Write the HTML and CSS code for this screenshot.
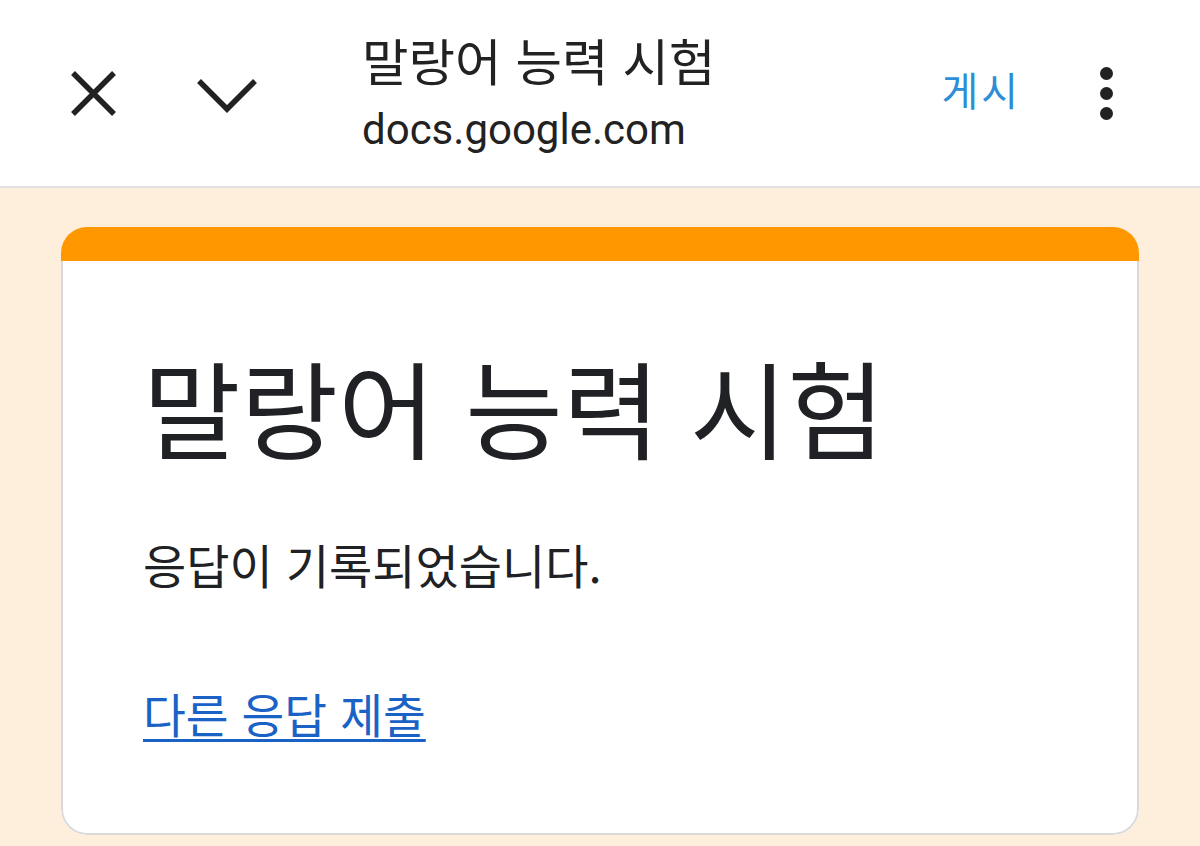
FILE: index.html
```html
<!DOCTYPE html>
<html lang="ko">
<head>
<meta charset="utf-8">
<meta name="viewport" content="width=device-width, initial-scale=1">
<title>말랑어 능력 시험</title>
<link rel="stylesheet" href="styles.css">
</head>
<body>

<header class="topbar">
	<svg class="icon-close" viewBox="0 0 45 45">
		<path d="M2 2 L43 43 M43 2 L2 43" />
	</svg>
	<svg class="icon-chevron" viewBox="0 0 60 36">
		<path d="M2 3 L30 31 L58 3" />
	</svg>
	<div class="titles">
		<div class="page-title">말랑어 능력 시험</div>
		<div class="page-url">docs.google.com</div>
	</div>
	<div class="post">게시</div>
	<div class="kebab"><span></span><span></span><span></span></div>
</header>

<main class="page">
	<div class="card">
		<div class="card-stripe"></div>
		<div class="card-body">
			<h1 class="form-title">말랑어 능력 시험</h1>
			<p class="form-msg">응답이 기록되었습니다.</p>
			<a class="form-link" href="#">다른 응답 제출</a>
		</div>
	</div>
</main>

</body>
</html>
```

FILE: styles.css
```css
body {
	margin: 0;
	background: #fdefdb;
	font-family: "Noto Sans CJK KR", "Roboto", sans-serif;
	color: #202124;
}

/* top chrome bar */
.topbar {
	display: flex;
	align-items: center;
	height: 186px;
	padding-left: 71px;
	background: #fff;
	border-bottom: 2px solid #e2e2e2;
}

.icon-close {
	width: 45px;
	height: 45px;
	fill: none;
	stroke: #222;
	stroke-width: 5.5;
}

.icon-chevron {
	width: 60px;
	height: 36px;
	margin-left: 81px;
	margin-top: 6px;
	fill: none;
	stroke: #222;
	stroke-width: 5.5;
}

.titles {
	flex: 1;
	margin-left: 105px;
	margin-top: -2px;
}

.page-title {
	font-size: 50.5px;
	line-height: 60px;
	color: #222;
}

.page-url {
	font-family: "Roboto", sans-serif;
	font-size: 42px;
	line-height: 50px;
	margin-top: 16px;
	color: #222;
}

.post {
	font-size: 40px;
	letter-spacing: 3px;
	color: #2d8ed8;
	margin-right: 79px;
	margin-top: -8px;
}

.kebab {
	display: flex;
	flex-direction: column;
	gap: 7px;
	margin-right: 87px;
}

.kebab span {
	width: 13px;
	height: 13px;
	border-radius: 50%;
	background: #222;
}

/* form card */
.page {
	padding: 39px 61px 0;
}

.card {
	border-radius: 26px;
	overflow: hidden;
	background: #fff;
}

.card-stripe {
	height: 34px;
	background: #ff9800;
}

.card-body {
	padding: 79px 80px 90px;
	border: 2px solid #d9d9d9;
	border-top: none;
	border-radius: 0 0 26px 26px;
}

.form-title {
	margin: 0;
	font-size: 106px;
	font-weight: 400;
	line-height: 130px;
}

.form-msg {
	margin: 64px 0 0;
	font-size: 47px;
	line-height: 60px;
}

.form-link {
	display: inline-block;
	margin-top: 89px;
	font-size: 46.5px;
	line-height: 60px;
	color: #1a62c5;
	text-decoration-thickness: 3px;
	text-underline-offset: 6px;
}
```
